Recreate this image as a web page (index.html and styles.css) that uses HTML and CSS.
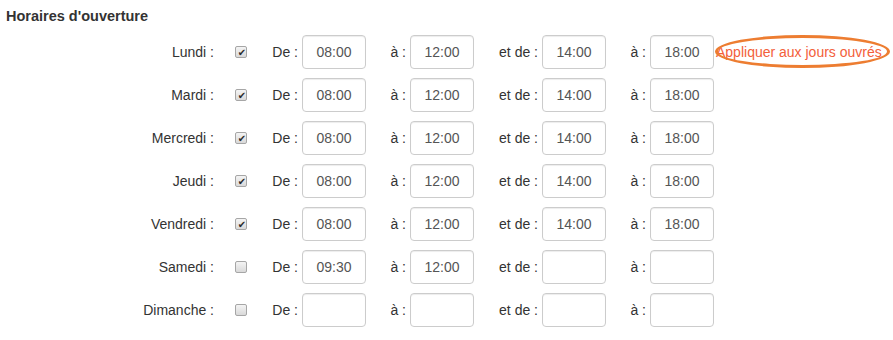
FILE: index.html
```html
<!DOCTYPE html>
<html>
<head>
   <title>Horaires d'ouverture</title>
   <meta charset="utf-8">
   <link rel="stylesheet" href="styles.css">
</head>
<body>
   <h4 class="title">Horaires d'ouverture</h4>
   <div class="hours">
	  <label class="day">Lundi :</label>
	  <span class="check"><input type="checkbox" checked></span>
	  <label class="lbl">De :</label><input class="time" value="08:00">
	  <label class="lbl">à :</label><input class="time" value="12:00">
	  <label class="lbl">et de :</label><input class="time" value="14:00">
	  <label class="lbl">à :</label><input class="time" value="18:00">
	  <span class="apply"><a href="#">Appliquer aux jours ouvrés</a></span>

	  <label class="day">Mardi :</label>
	  <span class="check"><input type="checkbox" checked></span>
	  <label class="lbl">De :</label><input class="time" value="08:00">
	  <label class="lbl">à :</label><input class="time" value="12:00">
	  <label class="lbl">et de :</label><input class="time" value="14:00">
	  <label class="lbl">à :</label><input class="time" value="18:00">
	  <span></span>

	  <label class="day">Mercredi :</label>
	  <span class="check"><input type="checkbox" checked></span>
	  <label class="lbl">De :</label><input class="time" value="08:00">
	  <label class="lbl">à :</label><input class="time" value="12:00">
	  <label class="lbl">et de :</label><input class="time" value="14:00">
	  <label class="lbl">à :</label><input class="time" value="18:00">
	  <span></span>

	  <label class="day">Jeudi :</label>
	  <span class="check"><input type="checkbox" checked></span>
	  <label class="lbl">De :</label><input class="time" value="08:00">
	  <label class="lbl">à :</label><input class="time" value="12:00">
	  <label class="lbl">et de :</label><input class="time" value="14:00">
	  <label class="lbl">à :</label><input class="time" value="18:00">
	  <span></span>

	  <label class="day">Vendredi :</label>
	  <span class="check"><input type="checkbox" checked></span>
	  <label class="lbl">De :</label><input class="time" value="08:00">
	  <label class="lbl">à :</label><input class="time" value="12:00">
	  <label class="lbl">et de :</label><input class="time" value="14:00">
	  <label class="lbl">à :</label><input class="time" value="18:00">
	  <span></span>

	  <label class="day">Samedi :</label>
	  <span class="check"><input type="checkbox"></span>
	  <label class="lbl">De :</label><input class="time" value="09:30">
	  <label class="lbl">à :</label><input class="time" value="12:00">
	  <label class="lbl">et de :</label><input class="time" value="">
	  <label class="lbl">à :</label><input class="time" value="">
	  <span></span>

	  <label class="day">Dimanche :</label>
	  <span class="check"><input type="checkbox"></span>
	  <label class="lbl">De :</label><input class="time" value="">
	  <label class="lbl">à :</label><input class="time" value="">
	  <label class="lbl">et de :</label><input class="time" value="">
	  <label class="lbl">à :</label><input class="time" value="">
	  <span></span>
   </div>
</body>
</html>
```

FILE: styles.css
```css
	body {
	  margin: 0;
	  padding: 6px 0 0 0;
	  font-family: "Liberation Sans", Arial, sans-serif;
	  font-size: 14px;
	  color: #333;
	  background: #fff;
	}

	.title {
	  margin: 0 0 9px 6px;
	  font-size: 14.5px;
	  line-height: 20px;
	  font-weight: bold;
	  color: #333;
	}

	.hours {
	  display: grid;
	  grid-template-columns: 220px 42px 40px 64px 44px 64px 68px 64px 44px 64px auto;
	  grid-auto-rows: 34px;
	  row-gap: 9px;
	  align-items: center;
	}

	.day {
	  text-align: right;
	  padding-right: 6px;
	}

	.check {
	  padding-left: 15px;
	  height: 13px;
	}

	.check input {
	  -webkit-appearance: none;
	          appearance: none;
	  position: relative;
	  display: block;
	  width: 12px;
	  height: 12px;
	  margin: 0;
	  border: 1px solid #a6a6a6;
	  border-radius: 2px;
	  background: linear-gradient(#f4f4f4, #d9d9d9);
	}
	.check input:checked:after {
	  content: '\2714';
	  position: absolute;
	  top: -2px;
	  left: 0;
	  width: 12px;
	  text-align: center;
	  font-family: "DejaVu Sans", sans-serif;
	  font-size: 10px;
	  line-height: 15px;
	  color: #2b2b2b;
	}

	.lbl {
	  text-align: right;
	  padding-right: 4px;
	}

	.time {
	  box-sizing: border-box;
	  width: 64px;
	  height: 34px;
	  margin: 0;
	  padding: 0 6px;
	  border: 1px solid #ccc;
	  border-radius: 4px;
	  box-shadow: inset 0 1px 1px rgba(0,0,0,0.075);
	  font-family: inherit;
	  font-size: 14px;
	  color: #555;
	  text-align: center;
	}

	.apply {
	  position: relative;
	  display: flex;
	  align-items: center;
	  height: 100%;
	  padding-left: 2px;
	  white-space: nowrap;
	}
	.apply a {
	  color: #f3603a;
	  text-decoration: none;
	}
	.apply:after {
	  content: '';
	  position: absolute;
	  top: 0;
	  left: 1px;
	  width: 169px;
	  height: 27px;
	  border: 3px solid #ed7d31;
	  border-radius: 50%;
	}
```
